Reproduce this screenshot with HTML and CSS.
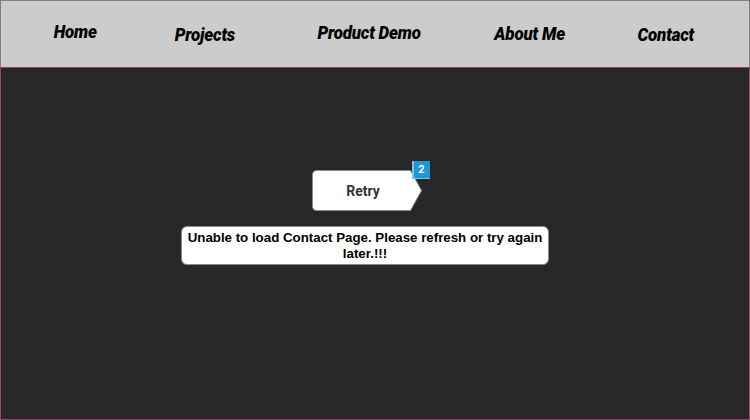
FILE: index.html
```html
<!DOCTYPE html>
<html>
<head>
<meta charset="utf-8">
<link rel="stylesheet" href="styles.css">
</head>
<body>
<div class="page">
  <header class="nav">
    <span class="nav-item i1">Home</span>
    <span class="nav-item i2">Projects</span>
    <span class="nav-item i3">Product Demo</span>
    <span class="nav-item i4">About Me</span>
    <span class="nav-item i5">Contact</span>
  </header>
  <main class="content">
    <div class="retry-wrap">
      <button class="retry">
        <svg class="retry-shape" width="111" height="41" viewBox="0 0 111 41">
          <path d="M5 0.5 H98.5 L109.5 20.5 L98.5 40.5 H5 Q0.5 40.5 0.5 36 V5 Q0.5 0.5 5 0.5 Z" fill="#ffffff" stroke="#8a8a8a" stroke-width="1"/>
        </svg>
        <span class="retry-label">Retry</span>
      </button>
      <span class="badge">2</span>
    </div>
    <div class="message">Unable to load Contact Page. Please refresh or try again later.!!!</div>
  </main>
</div>
</body>
</html>
```

FILE: styles.css
```css
* { box-sizing: border-box; }
html, body { margin: 0; padding: 0; }
body { width: 750px; height: 420px; overflow: hidden; background: #282828; }

.page { display: flex; flex-direction: column; height: 420px; }

.nav {
  height: 67px;
  background: #cccccc;
  border: 1px solid #808080;
  border-bottom: none;
  display: grid;
  grid-template-columns: 149px 110px 218px 104px 168px;
  align-items: start;
}
.nav-item {
  justify-self: center;
  font-family: Roboto, "Liberation Sans", sans-serif;
  font-weight: 900;
  font-style: italic;
  font-size: 19px;
  letter-spacing: -0.2px;
  color: #000;
  line-height: 20px;
  transform: scaleX(0.89);
}
.i1 { padding-top: 21px; }
.i2 { padding-top: 24px; }
.i3 { padding-top: 22px; }
.i4 { padding-top: 23px; }
.i5 { padding-top: 24px; }

.content {
  flex: 1;
  background: #282828;
  border: 1px solid #a0426f;
  display: flex;
  flex-direction: column;
  align-items: center;
  padding-top: 102px;
  padding-right: 20px;
}

.retry-wrap { position: relative; width: 111px; height: 41px; margin-left: 4px; }
.retry {
  position: relative;
  width: 111px; height: 41px;
  padding: 0; margin: 0; border: 0;
  background: transparent;
  display: flex; align-items: center; justify-content: center;
  cursor: pointer;
}
.retry-shape { position: absolute; left: 0; top: 0; }
.retry-label {
  position: relative;
  font-family: Roboto, "Liberation Sans", sans-serif;
  font-weight: 700;
  font-size: 14px;
  color: #333333;
  padding-right: 8px;
}
.badge {
  position: absolute;
  left: 100px; top: -9px;
  width: 18px; height: 18px;
  background: #1b98d5;
  border-left: 2px solid #7cc4ea;
  border-bottom: 1px solid #7cc4ea;
  color: #fff;
  font-family: Roboto, "Liberation Sans", sans-serif;
  font-weight: 700;
  font-size: 11px;
  display: flex; align-items: center; justify-content: center;
}

.message {
  margin-top: 15px;
  width: 368px;
  height: 39px;
  background: #ffffff;
  border: 1px solid #8a8a8a;
  border-radius: 6px;
  font-family: "Liberation Sans", Arial, sans-serif;
  font-weight: 700;
  font-size: 13.3px;
  line-height: 16px;
  color: #000;
  text-align: center;
  padding: 3px 3px 0;
}
```
